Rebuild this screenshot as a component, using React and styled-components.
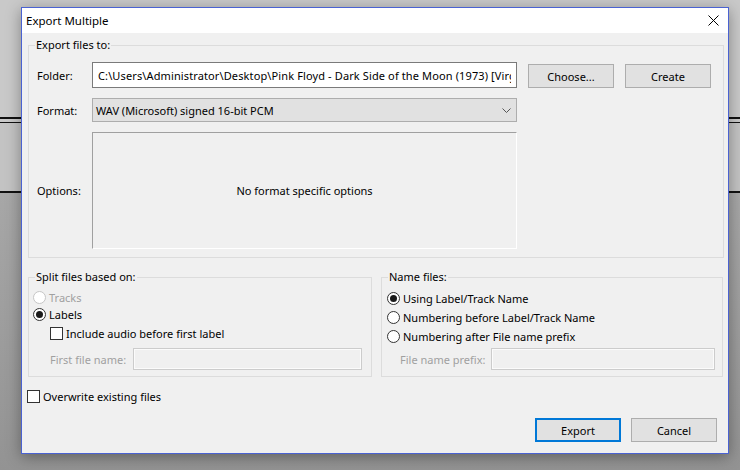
import React from 'react';
import styled, { createGlobalStyle } from 'styled-components';

const GlobalStyle = createGlobalStyle`
  * { box-sizing: border-box; }
  body {
    margin: 0;
    font-family: 'Noto Sans', 'Open Sans', sans-serif;
    font-size: 11px;
    color: #000;
    background: linear-gradient(
      to bottom,
      #c9c9c9 0 117px,
      #111 117px 119px,
      #c9c9c9 119px 122px,
      #111 122px 123px,
      #c3c3c3 123px 191px,
      #111 191px 193px,
      #a7a7a7 193px,
      #939393 470px
    );
  }
`;

const Desktop = styled.div`
  width: 740px;
  height: 470px;
  padding: 7px 0 0 21px;
  overflow: hidden;
`;

const Dialog = styled.div`
  width: 708px;
  height: 447px;
  border: 1px solid #4a62d2;
  background: #f0f0f0;
  display: flex;
  flex-direction: column;
  box-shadow: 0 3px 14px rgba(0, 0, 0, 0.35);
`;

const TitleBar = styled.div`
  height: 25px;
  flex: none;
  background: #fff;
  display: flex;
  align-items: center;
  justify-content: space-between;
  padding: 0 9px 1px 4px;
  font-size: 11.5px;
`;

const Body = styled.div`
  flex: 1;
  display: flex;
  flex-direction: column;
  padding: 4px 4px 11px 6px;
`;

const Group = styled.fieldset`
  margin: 0;
  padding: 0;
  min-width: 0;
  border: 1px solid #dcdcdc;
`;

const Legend = styled.legend`
  margin-left: 6px;
  padding: 0 1px;
  line-height: 16px;
`;

const ExportGrid = styled.div`
  display: grid;
  grid-template-columns: 44px 425px 86px 86px;
  grid-template-rows: 26px 24px 117px;
  column-gap: 11px;
  row-gap: 10px;
  padding: 9px 0 8px 8px;
  align-items: center;
`;

const FieldLabel = styled.span`
  flex: none;
  width: ${p => (p.$w ? `${p.$w}px` : 'auto')};
  color: ${p => (p.$disabled ? '#a0a0a0' : '#000')};
  white-space: nowrap;
`;

const TextBox = styled.input`
  height: ${p => (p.$disabled ? '22px' : '26px')};
  width: 100%;
  min-width: 0;
  margin: 0;
  padding: 0 5px;
  font: inherit;
  letter-spacing: ${p => (p.$disabled ? 0 : '0.12px')};
  color: #000;
  background: ${p => (p.$disabled ? '#f0f0f0' : '#fff')};
  border: 1px solid ${p => (p.$disabled ? '#cccccc' : '#7a7a7a')};
  box-shadow: ${p => (p.$disabled ? 'inset 0 0 0 1px #fbfbfb' : 'none')};
  outline: none;
`;

const Select = styled.div`
  height: 24px;
  display: flex;
  align-items: center;
  justify-content: space-between;
  padding: 0 5px 0 3px;
  background: #e1e1e1;
  border: 1px solid #adadad;
`;

const OptionsPane = styled.div`
  grid-column: 2;
  height: 117px;
  display: flex;
  align-items: center;
  justify-content: center;
  border-top: 1px solid #a0a0a0;
  border-left: 1px solid #a0a0a0;
  border-right: 1px solid #fff;
  border-bottom: 1px solid #fff;
`;

const Button = styled.button`
  width: 86px;
  height: 24px;
  margin: 0;
  padding: 0;
  font: inherit;
  color: #000;
  background: #e1e1e1;
  border: ${p => (p.$default ? '2px solid #0078d7' : '1px solid #adadad')};
  align-self: end;
`;

const Columns = styled.div`
  display: grid;
  grid-template-columns: 344px 342px;
  column-gap: 9px;
  margin-top: 11px;
`;

const GroupBody = styled.div`
  display: flex;
  flex-direction: column;
  padding: ${p => p.$pad};
`;

const OptionRow = styled.label`
  display: flex;
  align-items: center;
  gap: 3px;
  height: ${p => p.$h || 17}px;
  padding-left: ${p => p.$indent || 0}px;
  margin-top: ${p => p.$mt || 0}px;
  margin-left: ${p => p.$ml || 0}px;
  color: ${p => (p.$disabled ? '#a0a0a0' : '#000')};
  white-space: nowrap;
`;

const Radio = styled.span`
  width: 13px;
  height: 13px;
  flex: none;
  border-radius: 50%;
  border: 1px solid ${p => (p.$disabled ? '#c6c6c6' : '#333')};
  background: #fff;
  display: flex;
  align-items: center;
  justify-content: center;
  &::after {
    content: '';
    width: 7px;
    height: 7px;
    border-radius: 50%;
    background: ${p => (p.$checked ? '#1a1a1a' : 'transparent')};
  }
`;

const Check = styled.span`
  width: 13px;
  height: 13px;
  flex: none;
  border: 1px solid #333;
  background: #fff;
`;

const PrefixRow = styled.div`
  display: flex;
  align-items: center;
  margin-top: ${p => p.$mt}px;
  padding-left: ${p => p.$indent}px;
`;

const ButtonRow = styled.div`
  margin-top: auto;
  display: flex;
  justify-content: flex-end;
  gap: 10px;
  padding-right: 7px;
`;

const CloseIcon = () => (
  <svg width="11" height="11" viewBox="0 0 11 11">
    <path d="M0.5 0.5 L10.5 10.5 M10.5 0.5 L0.5 10.5" stroke="#000" strokeWidth="1" />
  </svg>
);

const Chevron = () => (
  <svg width="9" height="5" viewBox="0 0 9 5">
    <path d="M0.5 0.5 L4.5 4.5 L8.5 0.5" stroke="#555" strokeWidth="1" fill="none" />
  </svg>
);

export default function App() {
  return (
    <Desktop>
      <GlobalStyle />
      <Dialog>
        <TitleBar>
          <span>Export Multiple</span>
          <CloseIcon />
        </TitleBar>
        <Body>
          <Group>
            <Legend>Export files to:</Legend>
            <ExportGrid>
              <FieldLabel>Folder:</FieldLabel>
              <TextBox
                readOnly
                value="C:\Users\Administrator\Desktop\Pink Floyd - Dark Side of the Moon (1973) [Virgin]"
              />
              <Button>Choose...</Button>
              <Button>Create</Button>
              <FieldLabel>Format:</FieldLabel>
              <Select>
                <span>WAV (Microsoft) signed 16-bit PCM</span>
                <Chevron />
              </Select>
              <span />
              <span />
              <FieldLabel>Options:</FieldLabel>
              <OptionsPane>No format specific options</OptionsPane>
            </ExportGrid>
          </Group>

          <Columns>
            <Group>
              <Legend>Split files based on:</Legend>
              <GroupBody $pad="4px 9px 6px 4px">
                <OptionRow $disabled>
                  <Radio $disabled />
                  Tracks
                </OptionRow>
                <OptionRow>
                  <Radio $checked />
                  Labels
                </OptionRow>
                <OptionRow $indent={17} $mt={2}>
                  <Check />
                  Include audio before first label
                </OptionRow>
                <PrefixRow $mt={6} $indent={17}>
                  <FieldLabel $disabled $w={83}>First file name:</FieldLabel>
                  <TextBox $disabled readOnly value="" />
                </PrefixRow>
              </GroupBody>
            </Group>
            <Group>
              <Legend>Name files:</Legend>
              <GroupBody $pad="4px 7px 6px 5px">
                <OptionRow $h={19}>
                  <Radio $checked />
                  Using Label/Track Name
                </OptionRow>
                <OptionRow $h={19}>
                  <Radio />
                  Numbering before Label/Track Name
                </OptionRow>
                <OptionRow $h={19}>
                  <Radio />
                  Numbering after File name prefix
                </OptionRow>
                <PrefixRow $mt={2} $indent={13}>
                  <FieldLabel $disabled $w={91}>File name prefix:</FieldLabel>
                  <TextBox $disabled readOnly value="" />
                </PrefixRow>
              </GroupBody>
            </Group>
          </Columns>

          <OptionRow $mt={11} $ml={-1}>
            <Check />
            Overwrite existing files
          </OptionRow>

          <ButtonRow>
            <Button $default>Export</Button>
            <Button>Cancel</Button>
          </ButtonRow>
        </Body>
      </Dialog>
    </Desktop>
  );
}
